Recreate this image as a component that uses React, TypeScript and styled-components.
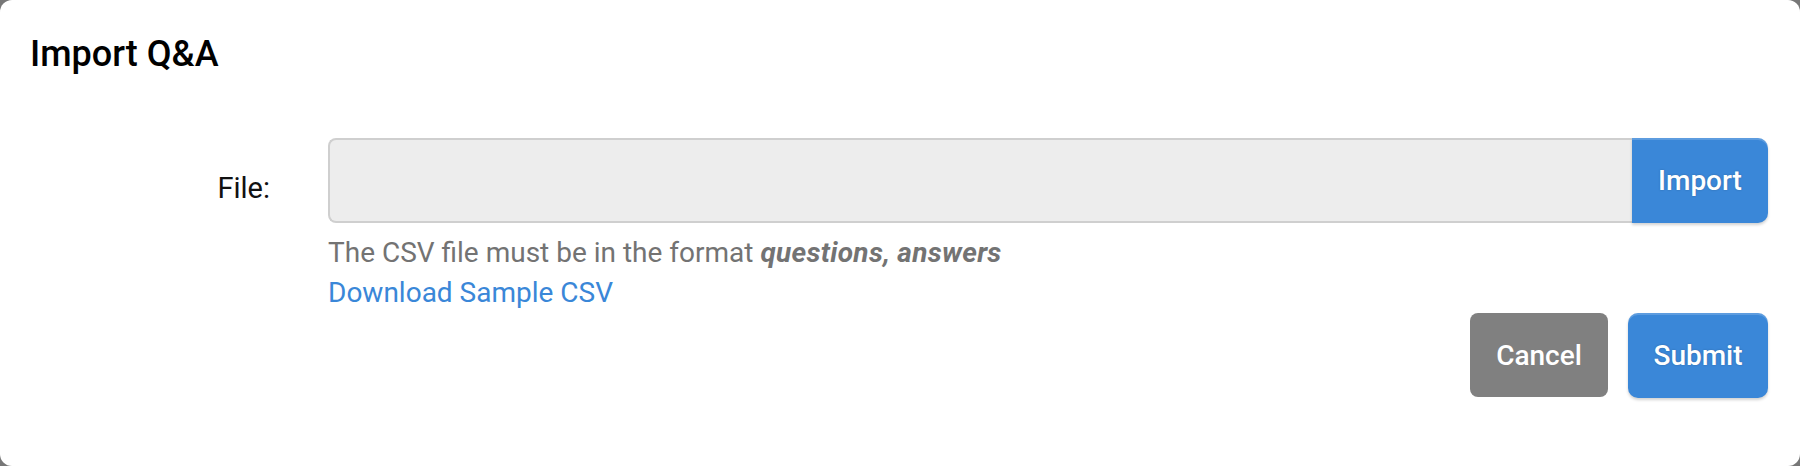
import React from "react";
import styled, { createGlobalStyle } from "styled-components";

const Global = createGlobalStyle`
  html, body { margin: 0; padding: 0; background: #777777; }
  body { font-family: Roboto, "Liberation Sans", Arial, sans-serif; }
  * { box-sizing: border-box; }
`;

const Modal = styled.div`
  width: 1800px;
  height: 466px;
  background: #ffffff;
  border-radius: 12px;
  display: flex;
  flex-direction: column;
  overflow: hidden;
`;

const Header = styled.div`
  padding: 34px 30px 0 30px;
`;

const Title = styled.h4`
  margin: 0;
  font-size: 36px;
  line-height: 40px;
  font-weight: 500;
  color: #000;
`;

const Body = styled.div`
  padding: 64px 32px 0 0;
  display: flex;
  flex-direction: column;
`;

const FormRow = styled.div`
  display: grid;
  grid-template-columns: 270px 1fr;
  column-gap: 58px;
`;

const Label = styled.label`
  text-align: right;
  font-size: 29px;
  line-height: 40px;
  padding-top: 30px;
  color: #111;
`;

const Field = styled.div`
  display: flex;
  flex-direction: column;
`;

const InputGroup = styled.div`
  display: flex;
  height: 85px;
`;

const FileInput = styled.div`
  flex: 1;
  background: #ededed;
  border: 2px solid #cfcfcf;
  border-right: none;
  border-radius: 8px 0 0 8px;
`;

const BlueButton = styled.button<{ $grouped?: boolean; $width: number }>`
  border: none;
  background: #3a87d8;
  color: #fff;
  font-family: Roboto, "Liberation Sans", Arial, sans-serif;
  font-size: 28px;
  font-weight: 500;
  width: ${(p) => p.$width}px;
  height: 85px;
  padding: 0;
  border-radius: ${(p) => (p.$grouped ? "0 10px 10px 0" : "10px")};
  box-shadow: inset 0 2px 0 rgba(255, 255, 255, 0.18), 0 2px 3px rgba(0, 0, 0, 0.18);
  text-shadow: 0 0 2px rgba(0, 0, 0, 0.25);
  cursor: pointer;
`;

const GreyButton = styled.button`
  border: none;
  background: #808080;
  color: #fff;
  font-family: Roboto, "Liberation Sans", Arial, sans-serif;
  font-size: 28px;
  font-weight: 500;
  width: 138px;
  height: 84px;
  padding: 0;
  border-radius: 8px;
  cursor: pointer;
`;

const Help = styled.div`
  margin-top: 10px;
  font-size: 28px;
  line-height: 40px;
  color: #737373;
`;

const Emph = styled.em`
  font-weight: 700;
  font-style: italic;
  letter-spacing: 0.3px;
`;

const Link = styled.a`
  display: block;
  color: #3a87d8;
  text-decoration: none;
  font-size: 28px;
  line-height: 40px;
`;

const Footer = styled.div`
  display: flex;
  justify-content: flex-end;
  gap: 20px;
`;

export default function App() {
  return (
    <>
      <Global />
      <Modal>
        <Header>
          <Title>Import Q&amp;A</Title>
        </Header>
        <Body>
          <FormRow>
            <Label>File:</Label>
            <Field>
              <InputGroup>
                <FileInput />
                <BlueButton $grouped $width={136}>Import</BlueButton>
              </InputGroup>
              <Help>
                The CSV file must be in the format <Emph>questions, answers</Emph>
                <Link href="#">Download Sample CSV</Link>
              </Help>
            </Field>
          </FormRow>
          <Footer>
            <GreyButton>Cancel</GreyButton>
            <BlueButton $width={140}>Submit</BlueButton>
          </Footer>
        </Body>
      </Modal>
    </>
  );
}
